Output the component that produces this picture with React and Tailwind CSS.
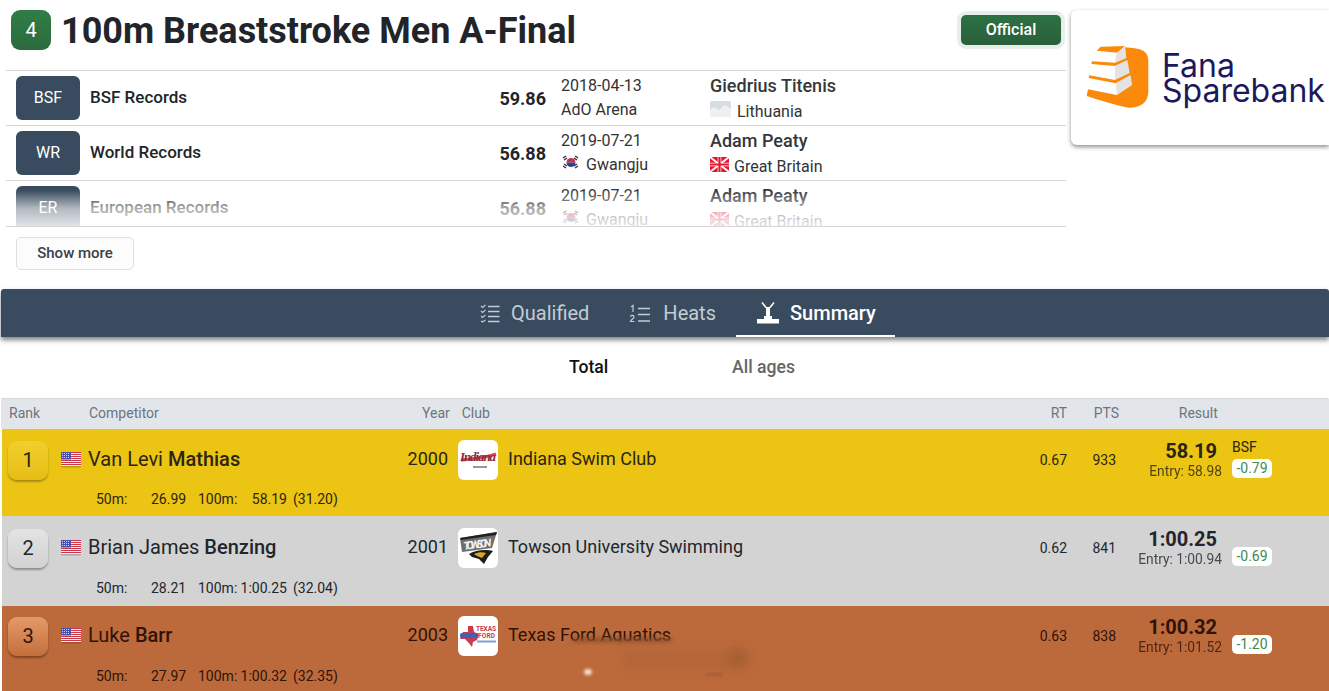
import React from "react";

function UsFlag() {
  return (
    <svg width="22" height="17" viewBox="0 0 22 17" className="shrink-0">
      <rect x="1" y="1" width="20" height="14" fill="#fff" />
      {[1, 3, 5, 7, 9, 11, 13].map((y) => (
        <rect key={y} x="1" y={y} width="20" height="1.1" fill="#c8384a" />
      ))}
      <rect x="1" y="1" width="10" height="7.5" fill="#4a4fa8" />
      {[2.5, 4.5, 6.5].map((y) =>
        [2.5, 4.5, 6.5, 8.5].map((x) => (
          <circle key={`${x}-${y}`} cx={x} cy={y} r="0.6" fill="#dfe3f5" />
        ))
      )}
      <rect x="1" y="15" width="20" height="1.5" fill="#000" opacity="0.2" />
    </svg>
  );
}

function KrFlag() {
  return (
    <svg width="18" height="15" viewBox="0 0 18 15" className="shrink-0">
      <path d="M9 3a4.500 4.500 0 0 1 4.500 4.500h-9A4.500 4.500 0 0 1 9 3z" fill="#c8314a" />
      <path d="M4.500 7.500h9a4.500 4.500 0 0 1-9 0z" fill="#34408f" />
      <path d="M1 3l3 -2M2 5l3 -2M13 1l3 2M12 3l3 2M1 11l3 2M2 9l3 2M16 11l-3 2M15 9l-3 2" stroke="#333" strokeWidth="1.4" />
    </svg>
  );
}

function GbFlag() {
  return (
    <svg width="19" height="15" viewBox="0 0 19 15" className="shrink-0">
      <rect width="19" height="15" fill="#e0182f" />
      <path d="M0 0L19 15M19 0L0 15" stroke="#fff" strokeWidth="1.800" />
      <path d="M9.500 0v15M0 7.500h19" stroke="#fff" strokeWidth="3.600" />
      <path d="M9.500 0v15M0 7.500h19" stroke="#e0182f" strokeWidth="2.200" />
    </svg>
  );
}

function LtFlag() {
  return (
    <svg width="22" height="16" viewBox="0 0 22 16" className="shrink-0">
      <path d="M0 2a2 2 0 0 1 2-2h17a2 2 0 0 1 2 2v14H0z" fill="#d6dde0" />
      <path d="M0 9c3-4 5-3 7-1s3 1 5-2 5-2 9 2v8H0z" fill="#eef1f2" />
    </svg>
  );
}

function QualifiedIcon() {
  return (
    <svg width="20" height="20" viewBox="0 0 20 20" fill="none" stroke="#c4ccd5" className="shrink-0">
      <path d="M1 3l1.500 1.500L5.500 2M1 8l1.500 1.500L5.500 7M1 13l1.500 1.500L5.500 12M1 18l1.500 1L5.500 17" strokeWidth="1.100" />
      <path d="M8 3.500h11.500M8 8.500h11.500M8 13.500h11.500M8 18.500h11.500" strokeWidth="1.400" />
    </svg>
  );
}

function HeatsIcon() {
  return (
    <svg width="22" height="20" viewBox="0 0 22 20" fill="none" className="shrink-0">
      <path d="M2 4l2-1.500V9M1.500 13.500c.5-1.500 3.500-1.500 3.500.5 0 1.500-3 2.500-3.500 4.500H5.500" stroke="#c4ccd5" strokeWidth="1.200" />
      <path d="M9 5.500h12M9 11.500h12M9 18h12" stroke="#c4ccd5" strokeWidth="1.400" />
    </svg>
  );
}

function PodiumIcon() {
  return (
    <svg width="22" height="22" viewBox="0 0 22 22" fill="#fff" className="shrink-0">
      <path d="M5 0.500l4 5M17 0.500l-4 5" stroke="#fff" strokeWidth="1.600" />
      <rect x="9" y="5" width="4" height="9" />
      <rect x="7" y="14" width="8" height="3" />
      <rect x="0" y="17" width="22" height="4.500" />
    </svg>
  );
}

// drawn on a 3x grid, same as the zoomed reference crop
function BankLogo() {
  return (
    <svg width="80" height="75" viewBox="0 0 240 225" className="shrink-0">
      <path d="M135 22C180 25 205 30 205 62V155C205 190 175 205 145 203C100 195 60 180 20 168L24 148L110 165L155 135L138 55Z" fill="#fb8a0c" />
      <path d="M50 32L62 20L135 18L112 38Z" fill="#fb8a0c" />
      <path d="M110 38L135 22L139 55L105 67Z" fill="#e3e3e3" />
      <path d="M36 64L105 68L140 54L142 62L105 78L34 72Z" fill="#fb8a0c" />
      <path d="M105 78L142 60L149 100L105 122Z" fill="#e3e3e3" />
      <path d="M28 106L105 120L150 98L152 106L107 130L26 114Z" fill="#fb8a0c" />
      <path d="M108 130L152 106L156 135L110 165Z" fill="#e3e3e3" />
    </svg>
  );
}

function IndianaLogo() {
  return (
    <svg width="38" height="24" viewBox="0 0 38 24">
      <path d="M2 12C12 11 26 10 37 6" stroke="#d14a5a" strokeWidth="3" fill="none" />
      <text x="1" y="13" fontSize="13" fontWeight="700" fontStyle="italic" fill="#8f2a37" fontFamily="'Liberation Serif', serif" textLength="36">Indiana</text>
      <rect x="14" y="18" width="14" height="2" fill="#999" />
    </svg>
  );
}

function TowsonLogo() {
  return (
    <svg width="38" height="36" viewBox="0 0 38 36">
      <path d="M1 8L38 2 33 18 3 22z" fill="#6e6e6e" />
      <path d="M1 8L38 2l-1 3L2 10z" fill="#222" />
      <text x="5" y="20" fontSize="11" fontWeight="700" fontStyle="italic" fill="#f1f1f1" fontFamily="Roboto, sans-serif" textLength="28" transform="rotate(-8 5 20)">TOWSON</text>
      <path d="M10 24c6-4 17-5 24-3l-5 6-4 7-5-5-7-2z" fill="#1d1d1d" />
      <path d="M15 24c4-2 9-2 12-1l-4 5-5-2z" fill="#d9a520" />
    </svg>
  );
}

function TexasLogo() {
  return (
    <svg width="38" height="26" viewBox="0 0 38 26">
      <path d="M4 9h5V3h5l1 6 5 2-2 6-4 2-1 5-4-5-3-3H1z" fill="#c83a4d" />
      <rect x="1" y="10" width="18" height="5" rx="2" fill="#3a63b8" />
      <text x="17" y="8" fontSize="6.500" fontWeight="700" fill="#c83a4d" fontFamily="Roboto, sans-serif" textLength="20">TEXAS</text>
      <text x="19" y="15" fontSize="6.500" fontWeight="700" fill="#c83a4d" fontFamily="Roboto, sans-serif" textLength="17">FORD</text>
      <rect x="18" y="17.500" width="19" height="2" fill="#7fa0d8" />
    </svg>
  );
}

const records = [
  { code: "BSF", name: "BSF Records", time: "59.86", date: "2018-04-13", place: "AdO Arena", athlete: "Giedrius Titenis", flag: <LtFlag />, country: "Lithuania" },
  { code: "WR", name: "World Records", time: "56.88", date: "2019-07-21", placeFlag: <KrFlag />, place: "Gwangju", athlete: "Adam Peaty", flag: <GbFlag />, country: "Great Britain" },
  { code: "ER", name: "European Records", time: "56.88", date: "2019-07-21", placeFlag: <KrFlag />, place: "Gwangju", athlete: "Adam Peaty", flag: <GbFlag />, country: "Great Britain" },
];

const results = [
  { rank: 1, first: "Van Levi", last: "Mathias", year: 2000, logo: <IndianaLogo />, club: "Indiana Swim Club", rt: "0.67", pts: 933, result: "58.19", entry: "58.98", tag: "BSF", diff: "-0.79", split1: "26.99", split2: "58.19", lap: "(31.20)", row: "bg-[#ebc414] h-[87px] text-[#2b2410]", rankBox: "bg-gradient-to-b from-[#f2cf2c] to-[#e6bd14]", shadow: "shadow-[0_2px_2px_#a98c10]", head: "pt-[11px]", splitGap: "mt-[9px]" },
  { rank: 2, first: "Brian James", last: "Benzing", year: 2001, logo: <TowsonLogo />, club: "Towson University Swimming", rt: "0.62", pts: 841, result: "1:00.25", entry: "1:00.94", diff: "-0.69", split1: "28.21", split2: "1:00.25", lap: "(32.04)", row: "bg-[#d3d3d3] h-[90px] text-[#22262c]", rankBox: "bg-gradient-to-b from-[#e3e3e3] to-[#d2d2d2]", shadow: "shadow-[0_2px_2px_#8f8f8f]", head: "pt-[12px]", splitGap: "mt-[10px]" },
  { rank: 3, first: "Luke", last: "Barr", year: 2003, logo: <TexasLogo />, club: "Texas Ford Aquatics", rt: "0.63", pts: 838, result: "1:00.32", entry: "1:01.52", diff: "-1.20", split1: "27.97", split2: "1:00.32", lap: "(32.35)", row: "bg-[#bc6a3b] h-[85px] text-[#2f130a]", rankBox: "bg-gradient-to-b from-[#e59a66] to-[#c26f3e]", shadow: "shadow-[0_2px_2px_#85431f]", head: "pt-[10px]", splitGap: "mt-[10px]" },
];

function RecordRow({ rec }) {
  return (
    <div className="flex h-[55px] items-center border-t border-[#d6d6d6] pl-[10px] text-[#212529]">
      <div className="flex h-[44px] w-[64px] shrink-0 items-center justify-center rounded-md bg-[#394b5e] text-[16px] text-white">{rec.code}</div>
      <div className="ml-[10px] w-[340px] text-[17px] font-medium">{rec.name}</div>
      <div className="w-[116px] text-right text-[18px] font-bold">{rec.time}</div>
      <div className="ml-[15px] w-[149px] text-[16px] leading-[24px] text-[#333]">
        <div>{rec.date}</div>
        <div className="flex items-center gap-[6px]">
          {rec.placeFlag && <span className="-mt-[6px] ml-[1px]">{rec.placeFlag}</span>}
          {rec.place}
        </div>
      </div>
      <div>
        <div className="text-[18px] font-medium leading-[26px] text-[#33383d]">{rec.athlete}</div>
        <div className="flex translate-y-px items-center gap-[5px] text-[16px] leading-[24px] text-[#333]">
          <span className="-mt-[6px]">{rec.flag}</span>
          {rec.country}
        </div>
      </div>
    </div>
  );
}

function ResultRow({ r }) {
  return (
    <div className={`${r.row} ${r.head}`}>
      <div className="flex h-[40px] items-center">
        <div className={`ml-[6px] flex h-[39px] w-[40px] shrink-0 items-center justify-center rounded-[9px] text-[20px] ${r.rankBox} ${r.shadow}`}>{r.rank}</div>
        <div className="ml-[12px] -mt-[2px]"><UsFlag /></div>
        <div className="-mt-[2px] ml-[6px] w-[300px] text-[20px] leading-none">{r.first} <span className="font-medium">{r.last}</span></div>
        <div className="-mt-[3px] w-[60px] text-right text-[18px]">{r.year}</div>
        <div className="ml-[10px] flex h-[40px] w-[40px] shrink-0 items-center justify-center rounded-md bg-white">{r.logo}</div>
        <div className="-mt-[3px] ml-[10px] w-[528px] text-[18px]">{r.club}</div>
        <div className="w-[31px] text-right text-[14px]">{r.rt}</div>
        <div className="w-[49px] text-right text-[14px]">{r.pts}</div>
        <div className="mt-[1px] w-[106px] self-start text-right">
          <div className="pr-[5px] text-[20px] font-bold leading-[21px]">{r.result}</div>
          <div className="text-[13.8px] leading-[19px] opacity-80">Entry: {r.entry}</div>
        </div>
        <div className="ml-[10px] self-start">
          <div className="h-[18px] text-[14px] leading-[14px]">{r.tag}</div>
          <div className="mt-[1px] flex h-[19px] w-[40px] items-center justify-center rounded-[5px] bg-white text-[14px] text-[#3f8a4e]">{r.diff}</div>
        </div>
      </div>
      <div className={`${r.splitGap} flex h-[20px] items-center text-[14px]`}>
        <span className="ml-[94px] w-[55px]">50m:</span>
        <span className="w-[47px]">{r.split1}</span>
        <span className="w-[39px]">100m:</span>
        <span className="w-[50px] whitespace-nowrap text-right">{r.split2}</span>
        <span className="ml-[6px]">{r.lap}</span>
      </div>
    </div>
  );
}

export default function App() {
  return (
    <div className="relative h-[691px] w-[1329px] overflow-hidden bg-white" style={{ fontFamily: "Roboto, sans-serif" }}>
      <div className="flex h-[289px] items-start">
        <div className="ml-[6px] w-[1060px]">
          <div className="flex h-[70px] items-start pl-[5px] pt-[10px]">
            <div className="flex h-[40px] w-[40px] items-center justify-center rounded-[9px] bg-gradient-to-b from-[#2f7d46] to-[#2c6b3e] text-[20px] text-white">4</div>
            <h1 className="ml-[10px] text-[36px] font-bold leading-[42px] text-[#212529]">100m Breaststroke Men A-Final</h1>
            <div className="ml-auto mr-[5px] mt-[5px] flex h-[30px] w-[100px] items-center justify-center rounded-[5px] bg-gradient-to-b from-[#2d7143] to-[#2a5f3b] text-[16px] font-medium text-white ring-[4px] ring-[#e6efe9]">Official</div>
          </div>
          <div className="relative h-[157px] overflow-hidden border-b border-[#d6d6d6]">
            {records.map((rec) => <RecordRow key={rec.code} rec={rec} />)}
            <div className="absolute bottom-0 left-0 h-[36px] w-full bg-gradient-to-b from-white/0 via-white/60 to-white/85" />
          </div>
          <button className="ml-[10px] mt-[10px] h-[33px] w-[118px] rounded-[5px] border border-[#dcdfe3] bg-[#fcfcfc] text-[15px] font-medium text-[#3a4148]">Show more</button>
        </div>
        <div className="ml-[5px] mt-[10px] flex h-[135px] flex-1 items-center rounded-l-md bg-white pl-[9px] shadow-[0_2px_4px_rgba(0,0,0,0.45)]">
          <BankLogo />
          <div className="ml-[2px] text-[32px] leading-[25px] text-[#1b1a5c]" style={{ fontFamily: "Inter, sans-serif" }}>
            <div>Fana</div>
            <div>Sparebank</div>
          </div>
        </div>
      </div>

      <nav className="ml-px flex h-[48px] items-end rounded-t-[3px] bg-[#394b5e] pl-[479px] shadow-[0_3px_5px_rgba(0,0,0,0.5)]">
        <div className="flex h-[48px] items-center gap-[11px] text-[20px] text-[#c4ccd5]"><QualifiedIcon />Qualified</div>
        <div className="ml-[40px] flex h-[48px] items-center gap-[12px] text-[20px] text-[#c4ccd5]"><HeatsIcon />Heats</div>
        <div className="ml-[20px] flex h-[48px] w-[159px] items-center gap-[11px] border-b-2 border-white pl-[21px] pt-[2px] text-[20px] font-medium text-white"><PodiumIcon />Summary</div>
      </nav>

      <div className="flex h-[61px] items-center pb-[1px] pl-[569px] text-[17.6px]">
        <div className="w-[163px] font-medium text-[#111]">Total</div>
        <div className="font-medium text-[#666]">All ages</div>
      </div>

      <div className="ml-px">
        <div className="flex h-[31px] items-center rounded-t-[2px] border-t border-[#d4d8de] bg-[#e2e6eb] pb-[1px] text-[14px] text-[#6b7580]">
          <span className="ml-[8px] w-[80px]">Rank</span>
          <span className="w-[333px]">Competitor</span>
          <span>Year</span>
          <span className="ml-[12px] w-[589px]">Club</span>
          <span className="w-[20px]">RT</span>
          <span className="ml-[23px] w-[28px]">PTS</span>
          <span className="ml-[57px]">Result</span>
        </div>
        <div className="pl-px">
          {results.map((r) => <ResultRow key={r.rank} r={r} />)}
        </div>
      </div>

      {/* smudged patch over the club name */}
      <div className="absolute left-[566px] top-[640px] h-[42px] w-[200px] rounded-[10px] bg-[#bc6a3b] blur-[2px]" />
      <div className="absolute left-[572px] top-[638px] h-[4px] w-[100px] rounded-full bg-[#6d3a22] opacity-60 blur-[2px]" />
      <div className="absolute left-[620px] top-[650px] h-[20px] w-[130px] rounded-full bg-[#a85f35] opacity-40 blur-[6px]" />
      <div className="absolute left-[584px] top-[669px] h-[6px] w-[8px] rounded-full bg-[#f3dccb] blur-[1.5px]" />
      <div className="absolute left-[728px] top-[648px] h-[20px] w-[20px] rounded-full bg-[#9c5730] opacity-50 blur-[5px]" />
      <div className="absolute left-[705px] top-[673px] h-[3px] w-[18px] rounded-full bg-[#9c5730] opacity-60 blur-[1px]" />
    </div>
  );
}
